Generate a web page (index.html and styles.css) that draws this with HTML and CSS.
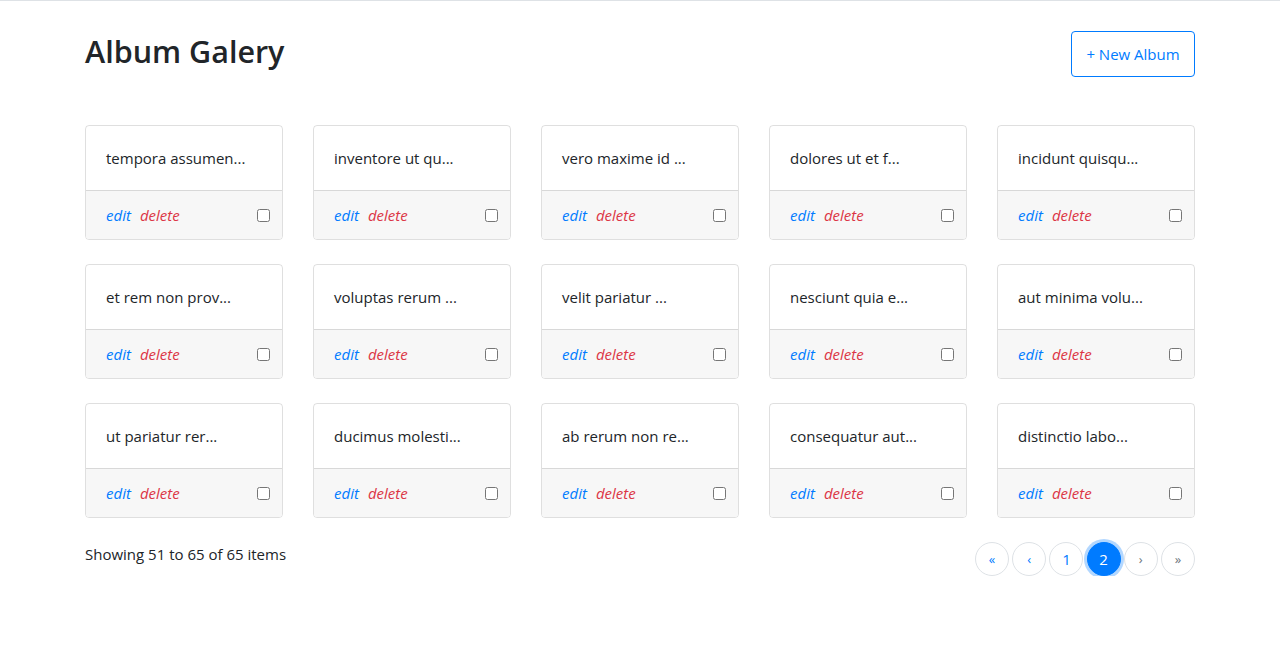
FILE: index.html
```html
<!DOCTYPE html>
<html>
<head>
<meta charset="utf-8">
<link rel="stylesheet" href="styles.css">
</head>
<body>
<div class="page">
  <header class="header">
    <h1 class="title">Album Galery</h1>
    <button class="btn-new">+ New Album</button>
  </header>
  <main class="grid">
    <div class="card"><div class="card-body">tempora assumen...</div><div class="card-footer"><span class="actions"><a class="edit">edit</a><a class="del">delete</a></span><input type="checkbox"></div></div>
    <div class="card"><div class="card-body">inventore ut qu...</div><div class="card-footer"><span class="actions"><a class="edit">edit</a><a class="del">delete</a></span><input type="checkbox"></div></div>
    <div class="card"><div class="card-body">vero maxime id ...</div><div class="card-footer"><span class="actions"><a class="edit">edit</a><a class="del">delete</a></span><input type="checkbox"></div></div>
    <div class="card"><div class="card-body">dolores ut et f...</div><div class="card-footer"><span class="actions"><a class="edit">edit</a><a class="del">delete</a></span><input type="checkbox"></div></div>
    <div class="card"><div class="card-body">incidunt quisqu...</div><div class="card-footer"><span class="actions"><a class="edit">edit</a><a class="del">delete</a></span><input type="checkbox"></div></div>
    <div class="card"><div class="card-body">et rem non prov...</div><div class="card-footer"><span class="actions"><a class="edit">edit</a><a class="del">delete</a></span><input type="checkbox"></div></div>
    <div class="card"><div class="card-body">voluptas rerum ...</div><div class="card-footer"><span class="actions"><a class="edit">edit</a><a class="del">delete</a></span><input type="checkbox"></div></div>
    <div class="card"><div class="card-body">velit pariatur ...</div><div class="card-footer"><span class="actions"><a class="edit">edit</a><a class="del">delete</a></span><input type="checkbox"></div></div>
    <div class="card"><div class="card-body">nesciunt quia e...</div><div class="card-footer"><span class="actions"><a class="edit">edit</a><a class="del">delete</a></span><input type="checkbox"></div></div>
    <div class="card"><div class="card-body">aut minima volu...</div><div class="card-footer"><span class="actions"><a class="edit">edit</a><a class="del">delete</a></span><input type="checkbox"></div></div>
    <div class="card"><div class="card-body">ut pariatur rer...</div><div class="card-footer"><span class="actions"><a class="edit">edit</a><a class="del">delete</a></span><input type="checkbox"></div></div>
    <div class="card"><div class="card-body">ducimus molesti...</div><div class="card-footer"><span class="actions"><a class="edit">edit</a><a class="del">delete</a></span><input type="checkbox"></div></div>
    <div class="card"><div class="card-body">ab rerum non re...</div><div class="card-footer"><span class="actions"><a class="edit">edit</a><a class="del">delete</a></span><input type="checkbox"></div></div>
    <div class="card"><div class="card-body">consequatur aut...</div><div class="card-footer"><span class="actions"><a class="edit">edit</a><a class="del">delete</a></span><input type="checkbox"></div></div>
    <div class="card"><div class="card-body">distinctio labo...</div><div class="card-footer"><span class="actions"><a class="edit">edit</a><a class="del">delete</a></span><input type="checkbox"></div></div>
  </main>
  <footer class="bottom">
    <div class="showing">Showing 51 to 65 of 65 items</div>
    <nav class="pager">
      <a class="pg small">&laquo;</a>
      <a class="pg small">&lsaquo;</a>
      <a class="pg">1</a>
      <a class="pg active">2</a>
      <a class="pg small grey">&rsaquo;</a>
      <a class="pg small grey">&raquo;</a>
    </nav>
  </footer>
</div>
</body>
</html>
```

FILE: styles.css
```css
html, body {
  margin: 0;
  padding: 0;
}
body {
  font-family: "Open Sans", "Noto Sans", sans-serif;
  font-size: 15px;
  line-height: 24px;
  color: #212529;
  background: #fff;
  border-top: 1px solid #dee2e6;
}
.page {
  width: 1110px;
  margin: 0 auto;
}
.header {
  display: flex;
  justify-content: space-between;
  align-items: center;
  padding-top: 30px;
  margin-bottom: 48px;
}
.title {
  margin: 0;
  font-size: 30.5px;
  font-weight: 600;
  line-height: 40px;
  color: #212529;
  position: relative;
  top: -3px;
}
.btn-new {
  font-family: inherit;
  font-size: 15px;
  line-height: 24px;
  color: #007bff;
  background: #fff;
  border: 1px solid #007bff;
  border-radius: 4px;
  height: 46px;
  width: 124px;
  padding: 0;
}
.grid {
  display: grid;
  grid-template-columns: repeat(5, 198px);
  column-gap: 30px;
  row-gap: 24px;
}
.card {
  border: 1px solid rgba(0,0,0,.125);
  border-radius: 4px;
  overflow: hidden;
}
.card-body {
  padding: 20px;
  height: 24px;
  white-space: nowrap;
}
.card-footer {
  display: flex;
  justify-content: space-between;
  align-items: center;
  background: #f7f7f7;
  border-top: 1px solid rgba(0,0,0,.125);
  padding: 12px 12px 12px 20px;
  height: 24px;
}
.actions a {
  font-style: italic;
  margin-right: 9px;
}
.edit { color: #007bff; }
.del { color: #dc3545; }
.card-footer input {
  margin: 0;
  width: 13px;
  height: 13px;
}
.bottom {
  display: flex;
  justify-content: space-between;
  align-items: flex-start;
  margin-top: 24px;
}
.showing {
  line-height: 24px;
}
.pager {
  display: flex;
  gap: 3.2px;
}
.pg {
  width: 32px;
  height: 32px;
  border: 1px solid #dee2e6;
  border-radius: 50%;
  display: flex;
  align-items: center;
  justify-content: center;
  color: #007bff;
  font-size: 15px;
}
.pg.small { font-size: 13px; }
.pg.grey { color: #6c757d; }
.pg.active {
  background: #007bff;
  border-color: #007bff;
  color: #fff;
  box-shadow: 0 0 0 3px rgba(0,123,255,.3);
}
```
